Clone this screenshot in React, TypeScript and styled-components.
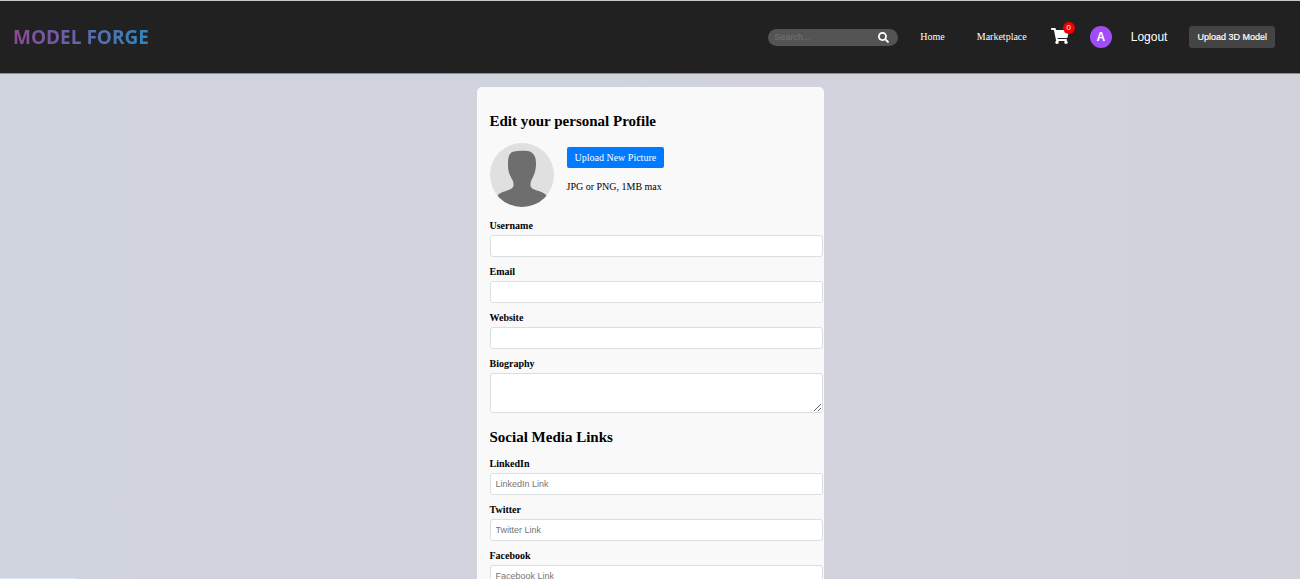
import React from "react";
import styled, { createGlobalStyle } from "styled-components";
import { FaSearch, FaShoppingCart } from "react-icons/fa";

const serif = `"Liberation Serif", "Times New Roman", serif`;
const sans = `"Liberation Sans", Arial, sans-serif`;

const GlobalStyle = createGlobalStyle`
  * { box-sizing: border-box; }
  body {
    margin: 0;
    font-family: ${serif};
    font-size: 10px;
    color: #000;
  }
`;

const Page = styled.div`
  min-height: 100vh;
  background: linear-gradient(90deg, #d0d4de, #d2d2db);
`;

const Header = styled.header`
  display: flex;
  align-items: center;
  justify-content: space-between;
  height: 74px;
  padding: 0 25px 0 13px;
  background: #212121;
  border-top: 1px solid #c9cccd;
  border-bottom: 1px solid #8e8e92;
`;

const Logo = styled.a`
  font: bold 19px/26px "Open Sans", "Noto Sans", sans-serif;
  color: transparent;
  text-decoration: none;
  background: linear-gradient(90deg, #8b4a93, #6a60a8 40%, #2f88bf);
  background-clip: text;
  -webkit-background-clip: text;
`;

const Nav = styled.nav`
  display: flex;
  align-items: center;
`;

const Search = styled.form`
  display: flex;
  align-items: center;
  width: 130px;
  height: 17px;
  margin-right: 22px;
  padding: 0 9px 0 6px;
  border-radius: 9px;
  background: #545454;
`;

const SearchInput = styled.input`
  flex: 1;
  min-width: 0;
  padding: 0;
  border: 0;
  outline: 0;
  background: transparent;
  color: #fff;
  font: 9px/12px ${sans};
  &::placeholder { color: #757575; opacity: 1; }
`;

const IconButton = styled.button`
  display: flex;
  padding: 0;
  border: 0;
  background: transparent;
  color: #fff;
`;

const NavLink = styled.a`
  margin-right: 32px;
  color: #fff;
  font-size: 10px;
  line-height: 12px;
  text-decoration: none;
`;

const CartLink = styled.a`
  position: relative;
  display: flex;
  margin: 0 21px 0 -8px;
  padding-bottom: 2px;
  color: #fff;
`;

const CartCount = styled.span`
  position: absolute;
  top: -5px;
  right: -6px;
  width: 12px;
  border-radius: 6px;
  background: #f00000;
  font: 8px/12px ${sans};
  text-align: center;
`;

const Avatar = styled.span`
  width: 22px;
  margin-right: 19px;
  border-radius: 50%;
  background: #a04df5;
  color: #fff;
  font: bold 12px/22px ${sans};
  text-align: center;
`;

const Logout = styled.button`
  margin-right: 22px;
  padding: 0;
  border: 0;
  background: transparent;
  color: #fff;
  font: 12px/16px ${sans};
`;

const UploadModel = styled.button`
  height: 22px;
  padding: 0 8px;
  border: 0;
  border-radius: 3px;
  background: #444;
  color: #fff;
  font: 9px/12px ${sans};
  -webkit-text-stroke: 0.2px #fff;
`;

const Card = styled.main`
  width: 347px;
  max-width: 100%;
  margin: 0 auto;
  padding: 25px 1px 13px 13px;
  border-radius: 5px;
  background: #f9f9f9;
`;

const Content = styled.div`
  padding: 13px 0;
`;

const Heading = styled.h2`
  margin: 0;
  font-size: 15px;
  line-height: 18px;
`;

const PictureRow = styled.section`
  display: flex;
  gap: 13px;
  margin: 13px 0;
`;

const Portrait = styled.svg`
  width: 64px;
  height: 64px;
  border-radius: 50%;
`;

const PictureActions = styled.div`
  display: flex;
  flex-direction: column;
  align-items: flex-start;
  gap: 13px;
  padding-top: 4px;
`;

const UploadPicture = styled.button`
  height: 21px;
  padding: 0 8px;
  border: 0;
  border-radius: 2px;
  background: #007bff;
  color: #fff;
  font: 10px/12px ${serif};
`;

const Hint = styled.p`
  margin: 0;
  line-height: 12px;
`;

const Fields = styled.div`
  display: flex;
  flex-direction: column;
  gap: 9px;
`;

const Field = styled.div`
  display: flex;
  flex-direction: column;
  gap: 3px;
`;

const Label = styled.label`
  font-weight: bold;
  font-size: 10px;
  line-height: 12px;
`;

const TextInput = styled.input`
  height: 22px;
  padding: 0 5px;
  border: 1px solid #dcdfdf;
  border-radius: 3px;
  background: #fff;
  font: 9px/12px ${sans};
  &::placeholder { color: #757575; opacity: 1; }
`;

const TextArea = styled.textarea`
  height: 40px;
  padding: 5px;
  border: 1px solid #dcdfdf;
  border-radius: 3px;
  background: #fff;
  font: 9px/12px ${sans};
  resize: vertical;
`;

const SocialHeading = styled(Heading)`
  margin: 15px 0 12px;
`;

const StatusStrip = styled.div`
  position: fixed;
  left: 0;
  bottom: 0;
  width: 75px;
  height: 1px;
  background: #dbe6f7;
`;

const profileFields = ["Username", "Email", "Website"];
const socialFields = ["LinkedIn", "Twitter", "Facebook"];

export default function App() {
  return (
    <Page>
      <GlobalStyle />
      <Header>
        <Logo href="#">MODEL FORGE</Logo>
        <Nav>
          <Search>
            <SearchInput aria-label="Search" placeholder="Search..." />
            <IconButton type="button" aria-label="Submit search"><FaSearch size={11} /></IconButton>
          </Search>
          <NavLink href="#">Home</NavLink>
          <NavLink href="#">Marketplace</NavLink>
          <CartLink href="#" aria-label="Cart">
            <FaShoppingCart size={18} />
            <CartCount>0</CartCount>
          </CartLink>
          <Avatar>A</Avatar>
          <Logout type="button">Logout</Logout>
          <UploadModel type="button">Upload 3D Model</UploadModel>
        </Nav>
      </Header>
      <Content>
        <Card>
          <Heading>Edit your personal Profile</Heading>
          <PictureRow>
            <Portrait viewBox="0 0 64 64" aria-hidden="true">
              <rect width="64" height="64" fill="#e0e0e0" />
              <path
                fill="#6e6e6e"
                d="M22 9 C27 8 36 7 41 9 C45 12 46 15 46 21 C46 29 43 34 41 38 C40 42 40 44 43 46 C48 48 54 49 57 53 L64 64 H0 L7 53 C10 49 16 48 21 46 C24 44 24 42 23 38 C21 34 18 30 18 23 C18 16 18 12 22 9 Z"
              />
            </Portrait>
            <PictureActions>
              <UploadPicture type="button">Upload New Picture</UploadPicture>
              <Hint>JPG or PNG, 1MB max</Hint>
            </PictureActions>
          </PictureRow>
          <Fields>
            {profileFields.map((name) => (
              <Field key={name}>
                <Label htmlFor={name}>{name}</Label>
                <TextInput id={name} />
              </Field>
            ))}
            <Field>
              <Label htmlFor="Biography">Biography</Label>
              <TextArea id="Biography" />
            </Field>
          </Fields>
          <SocialHeading>Social Media Links</SocialHeading>
          <Fields>
            {socialFields.map((name) => (
              <Field key={name}>
                <Label htmlFor={name}>{name}</Label>
                <TextInput id={name} placeholder={`${name} Link`} />
              </Field>
            ))}
          </Fields>
        </Card>
      </Content>
      <StatusStrip />
    </Page>
  );
}
